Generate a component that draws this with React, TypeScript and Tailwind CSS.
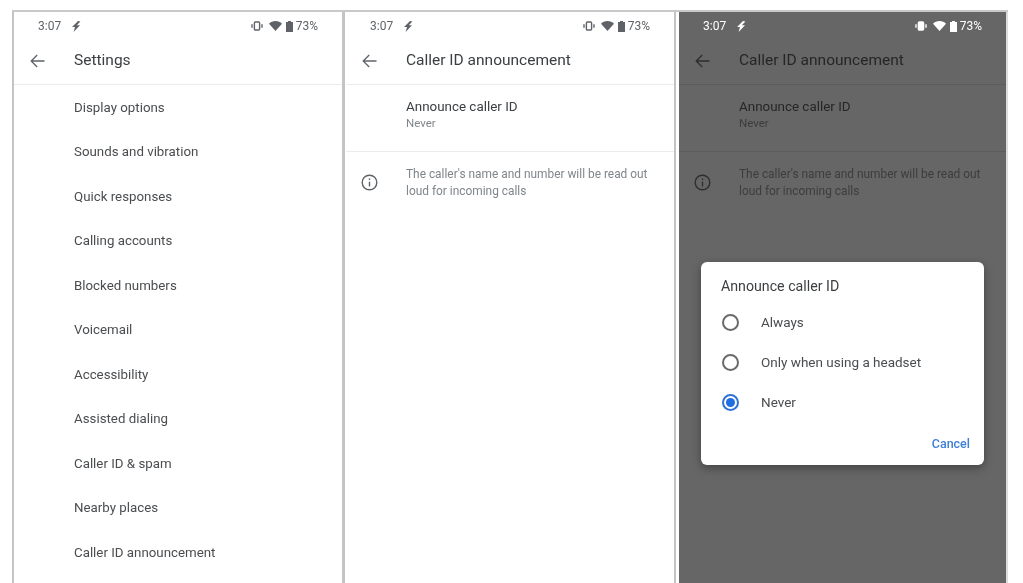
import React from "react";

const settings = [
    "Display options",
    "Sounds and vibration",
    "Quick responses",
    "Calling accounts",
    "Blocked numbers",
    "Voicemail",
    "Accessibility",
    "Assisted dialing",
    "Caller ID & spam",
    "Nearby places",
    "Caller ID announcement",
];

const BackArrow: React.FC<{ color: string }> = ({ color }) => (
    <svg width="15" height="14" viewBox="0 0 15 14" fill="none" stroke={color} strokeWidth="1.3">
        <path d="M14.5 7H1.2M7.2 1L1.2 7L7.2 13" />
    </svg>
);

const InfoIcon: React.FC<{ color: string }> = ({ color }) => (
    <svg width="17" height="17" viewBox="0 0 17 17" fill="none" stroke={color} strokeWidth="1.4">
        <circle cx="8.5" cy="8.5" r="7.3" />
        <path d="M8.5 7.6V12.5" />
        <path d="M8.5 4.4V6" />
    </svg>
);

const StatusBar: React.FC<{ dark?: boolean }> = ({ dark }) => {
    const color = dark ? "#ffffff" : "#5f6368";
    return (
        <div
            className={`flex h-[28px] items-center justify-between pl-[24px] pr-[24px] text-[12px] ${dark ? "text-white" : "text-[#5f6368]"}`}
        >
            <div className="flex items-center gap-[10px]">
                <span>3:07</span>
                <svg width="10" height="11" viewBox="0 0 10 11" fill={color}>
                    <path d="M7 0L1 6H4L2.6 11L9 4.2H5.8L9.4 0.6Z" />
                </svg>
            </div>
            <div className="flex items-center">
                <svg width="13" height="10" viewBox="0 0 13 10" fill="none" stroke={color} strokeWidth="1.4" className="mr-[5px]">
                    <rect x="3.4" y="1" width="5.2" height="8" rx="1" fill={dark ? color : "none"} />
                    <path d="M1 3.2V6.8M11 3.2V6.8" />
                </svg>
                <svg width="13" height="10" viewBox="0 0 13 10" fill={color} className="mr-[4px]">
                    <path d="M0 2.8C1.5 0.9 4 0 6.5 0C9 0 11.5 0.9 13 2.8L6.5 10Z" />
                </svg>
                <svg width="7" height="11" viewBox="0 0 7 11" fill={color} className="mr-[3px]">
                    <path d="M2 0H5V1H7V11H0V1H2Z" />
                </svg>
                <span>73%</span>
            </div>
        </div>
    );
};

const AppBar: React.FC<{ title: string; dark?: boolean }> = ({ title, dark }) => (
    <div className={`flex h-[45px] items-center border-b pb-[3px] ${dark ? "border-[#5c5c5c]" : "border-[#ececec]"}`}>
        <div className="flex w-[60px] justify-center pr-[13px]">
            <BackArrow color={dark ? "#2e2e2e" : "#5f6368"} />
        </div>
        <span className={`text-[15.5px] ${dark ? "text-[#262626]" : "text-[#3c4043]"}`}>{title}</span>
    </div>
);

const CallerIdContent: React.FC<{ dark?: boolean }> = ({ dark }) => (
    <>
        <AppBar title="Caller ID announcement" dark={dark} />
        <div className={`flex h-[67px] flex-col border-b pl-[60px] pt-[13px] ${dark ? "border-[#5c5c5c]" : "border-[#ececec]"}`}>
            <span className={`text-[13.4px] leading-[17px] ${dark ? "text-[#262626]" : "text-[#3c4043]"}`}>Announce caller ID</span>
            <span className={`text-[11.5px] leading-[17px] ${dark ? "text-[#3d3d3d]" : "text-[#80868b]"}`}>Never</span>
        </div>
        <div className="flex pt-[14px]">
            <div className="flex w-[60px] justify-center pr-[14px] pt-[7.5px]">
                <InfoIcon color={dark ? "#2e2e2e" : "#5f6368"} />
            </div>
            <p className={`w-[255px] text-[11.9px] leading-[17px] ${dark ? "text-[#3d3d3d]" : "text-[#80868b]"}`}>
                The caller's name and number will be read out loud for incoming calls
            </p>
        </div>
    </>
);

const Radio: React.FC<{ label: string; checked?: boolean }> = ({ label, checked }) => (
    <div className="flex h-[40px] items-center pl-[1px]">
        <div
            className={`flex h-[17px] w-[17px] items-center justify-center rounded-full border-2 ${checked ? "border-[#2f74d6]" : "border-[#6b6b6b]"}`}
        >
            {checked && <div className="h-[9px] w-[9px] rounded-full bg-[#1f6fe0]" />}
        </div>
        <span className="ml-[22px] text-[13.5px] text-[#4a4d50]">{label}</span>
    </div>
);

export default function App() {
    return (
        <div className="h-[583px] w-[1023px] overflow-hidden bg-white pl-[12px] pt-[10px] font-['Roboto',sans-serif] blur-[0.35px]">
            <div className="flex h-[573px] w-[996px] border-t-2 border-[#c9c9c9]">
                <div className="w-[333px] shrink-0 border-l-2 border-r-[3px] border-[#c4c4c4] bg-white">
                    <StatusBar />
                    <AppBar title="Settings" />
                    <div className="flex flex-col pt-[0.5px]">
                        {settings.map((item) => (
                            <div key={item} className="flex h-[44.5px] shrink-0 items-center pl-[60px] text-[13.3px] text-[#4a4d50]">
                                {item}
                            </div>
                        ))}
                    </div>
                </div>
                <div className="ml-[1px] w-[330px] shrink-0 border-r-2 border-[#c4c4c4] bg-white">
                    <StatusBar />
                    <CallerIdContent />
                </div>
                <div className="relative ml-[3px] w-[329px] shrink-0 border-r-2 border-[#dcdcdc] bg-[#666666]">
                    <StatusBar dark />
                    <CallerIdContent dark />
                    <div className="absolute left-[22px] top-[250px] h-[203px] w-[283px] rounded-[6px] bg-white px-[20px] pt-[15px] shadow-[0_3px_10px_rgba(0,0,0,0.35)]">
                        <div className="text-[14.2px] leading-[18px] text-[#3c4043]">Announce caller ID</div>
                        <div className="mt-[7px] flex flex-col">
                            <Radio label="Always" />
                            <Radio label="Only when using a headset" />
                            <Radio label="Never" checked />
                        </div>
                        <div className="-mr-[6px] mt-[13px] text-right text-[12.5px] font-medium text-[#3f7fd6]">Cancel</div>
                    </div>
                </div>
            </div>
        </div>
    );
}
